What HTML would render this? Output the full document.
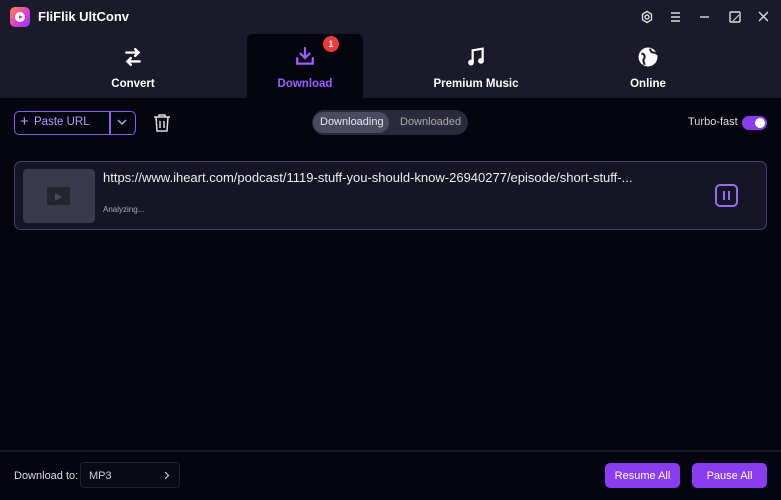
<!DOCTYPE html>
<html><head><style>
*{margin:0;padding:0;box-sizing:border-box}
body{width:781px;height:500px;background:#05050f;font-family:"Liberation Sans",sans-serif;position:relative;overflow:hidden;color:#fff}
.abs{position:absolute}
.hdr{left:0;top:0;width:781px;height:98px;background:#1a1a2a}
.tab{top:34px;height:64px;width:116px;text-align:center;font-size:11.5px;font-weight:bold}
.tab .lbl{position:absolute;left:0;right:0;top:44px}
.tab svg{position:absolute;left:48px;top:13px}
</style></head><body>
<div class="abs hdr"></div>
<div class="abs" style="left:10px;top:7px;width:20px;height:20px;border-radius:5px;background:linear-gradient(135deg,#ff8a3c,#d63ad8 60%,#8a3cf0)"></div>
<div class="abs" style="left:15px;top:12px;width:10px;height:10px;border-radius:50%;background:#fff"></div>
<div class="abs" style="left:19px;top:15px;width:0;height:0;border-left:4px solid #c53ad0;border-top:2.5px solid transparent;border-bottom:2.5px solid transparent"></div>
<div class="abs" style="left:38px;top:9px;font-size:13px;font-weight:bold">FliFlik UltConv</div>
<svg class="abs" style="left:638px;top:9px" width="130" height="16" viewBox="0 0 130 16" fill="none" stroke="#ddd" stroke-width="1.4">
<circle cx="9" cy="8" r="2"/><path d="M9 2.5l4.5 2.7v5.5L9 13.5 4.5 10.7V5.2z"/>
<path d="M33 4h9M33 8h9M33 12h9"/>
<path d="M62 8h9"/>
<rect x="92" y="3" width="10" height="10" rx="1"/><path d="M95 12l6-6" stroke-width="1"/>
<path d="M121 3l9 9M130 3l-9 9"/>
</svg>
<div class="abs tab" style="left:75px"><svg width="20" height="20" viewBox="0 0 18 18" fill="none" stroke="#fff" stroke-width="2.2" stroke-linecap="round"><path d="M3 5h11M11 2l3 3-3 3M15 13H4M7 10l-3 3 3 3"/></svg><div class="lbl">Convert</div></div>
<div class="abs tab" style="left:247px;background:#05050f;border-radius:6px 6px 0 0;color:#9a5cff"><svg width="20" height="20" viewBox="0 0 18 18" fill="none" stroke="#a35cff" stroke-width="2" stroke-linecap="round"><path d="M9 1v9M5 6l4 4 4-4M2 10v5h14v-5"/></svg><div class="lbl">Download</div></div>
<div class="abs" style="left:323px;top:36px;width:16px;height:16px;border-radius:50%;background:#f03a3a;font-size:9px;font-weight:bold;text-align:center;line-height:16px">1</div>
<div class="abs tab" style="left:418px"><svg width="20" height="20" viewBox="0 0 18 18" fill="#fff" stroke="#fff" stroke-width="2"><path d="M6 14V3l9-1.5V12" fill="none"/><circle cx="4.5" cy="14" r="2.6" stroke="none"/><circle cx="13.5" cy="12.5" r="2.6" stroke="none"/></svg><div class="lbl">Premium Music</div></div>
<div class="abs tab" style="left:590px"><svg width="20" height="20" viewBox="0 0 18 18"><circle cx="9" cy="9" r="8.5" fill="#fff"/><path d="M3 6c2 0 3 1 3 3s-2 2-1 4l1 3M11 1.5c0 2 1 3.5 3 3.5s3 1 3 2" stroke="#1a1a2a" stroke-width="1.8" fill="none"/></svg><div class="lbl">Online</div></div>
<div class="abs" style="left:14px;top:111px;width:122px;height:24px;border:1.5px solid #8a5cf0;border-radius:5px"></div>
<div class="abs" style="left:109px;top:112px;width:1.5px;height:22px;background:#8a5cf0"></div>
<div class="abs" style="left:20px;top:114px;font-size:15px;color:#b89aff;line-height:16px">+</div>
<div class="abs" style="left:34px;top:116px;font-size:11.5px;color:#b89aff">Paste URL</div>
<svg class="abs" style="left:117px;top:118px" width="10" height="8"><path d="M1 2l4 4 4-4" stroke="#b89aff" stroke-width="1.5" fill="none"/></svg>
<svg class="abs" style="left:153px;top:113px" width="18" height="20" viewBox="0 0 18 20" fill="none" stroke="#ddd" stroke-width="1.5"><path d="M1 4h16M6 4V2h6v2M3 4l1 14h10l1-14M7 8v7M11 8v7"/></svg>
<div class="abs" style="left:312px;top:110px;width:156px;height:25px;border-radius:13px;background:#2a2a3c"></div>
<div class="abs" style="left:313px;top:112px;width:76px;height:21px;border-radius:11px;background:#4a4a60"></div>
<div class="abs" style="left:320px;top:116px;font-size:11px;color:#e8e8f0">Downloading</div>
<div class="abs" style="left:400px;top:116px;font-size:11px;color:#aaa">Downloaded</div>
<div class="abs" style="left:688px;top:116px;font-size:11px;color:#ddd">Turbo-fast</div>
<div class="abs" style="left:742px;top:116px;width:25px;height:14px;border-radius:7px;background:#8a3cf0"></div>
<div class="abs" style="left:755px;top:118px;width:10px;height:10px;border-radius:50%;background:#fff"></div>
<div class="abs" style="left:14px;top:161px;width:753px;height:69px;border:1.5px solid #4a4070;border-radius:7px;background:#151525"></div>
<div class="abs" style="left:23px;top:169px;width:72px;height:54px;border-radius:4px;background:#3a3a4c"></div>
<div class="abs" style="left:47px;top:187px;width:23px;height:18px;background:#25252f;border-radius:1px"></div>
<div class="abs" style="left:55px;top:193px;width:0;height:0;border-left:7px solid #4a4a58;border-top:4px solid transparent;border-bottom:4px solid transparent"></div>
<div class="abs" style="left:103px;top:170px;font-size:13px;color:#eee">https://www.iheart.com/podcast/1119-stuff-you-should-know-26940277/episode/short-stuff-...</div>
<div class="abs" style="left:103px;top:205px;font-size:8px;color:#aab">Analyzing...</div>
<div class="abs" style="left:715px;top:184px;width:23px;height:23px;border:2px solid #9a6cf0;border-radius:5px"></div>
<div class="abs" style="left:723px;top:191px;width:2px;height:9px;background:#9a6cf0"></div>
<div class="abs" style="left:728px;top:191px;width:2px;height:9px;background:#9a6cf0"></div>
<div class="abs" style="left:0;top:450px;width:781px;height:1.5px;background:#1a1a2a"></div>
<div class="abs" style="left:14px;top:470px;font-size:11px;color:#ddd">Download to:</div>
<div class="abs" style="left:80px;top:462px;width:100px;height:26px;border:1px solid #22222e;border-radius:4px;background:#0a0a14"></div>
<div class="abs" style="left:89px;top:470px;font-size:11px;color:#ccc">MP3</div>
<svg class="abs" style="left:164px;top:471px" width="6" height="9"><path d="M1 1l3.5 3.5L1 8" stroke="#ccc" stroke-width="1.2" fill="none"/></svg>
<div class="abs" style="left:605px;top:463px;width:75px;height:25px;border-radius:5px;background:#8a3cf0;font-size:11px;text-align:center;line-height:26px">Resume All</div>
<div class="abs" style="left:692px;top:463px;width:75px;height:25px;border-radius:5px;background:#8a3cf0;font-size:11px;text-align:center;line-height:26px">Pause All</div>
</body></html>
